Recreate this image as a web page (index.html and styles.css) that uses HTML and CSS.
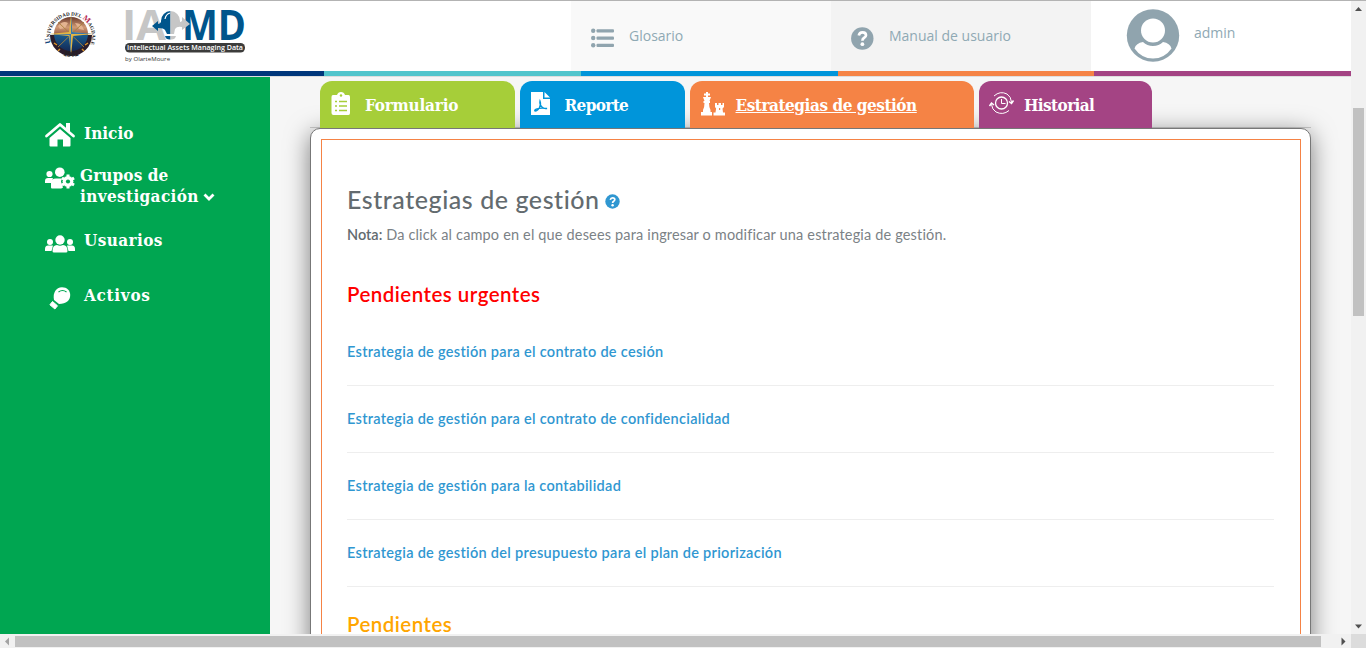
FILE: index.html
```html
<!DOCTYPE html>
<html lang="es">
<head>
<meta charset="utf-8">
<title>Estrategias de gestión</title>
<link rel="stylesheet" href="styles.css">
</head>
<body>
<div class="window">
  <div class="page">
    <header class="header">
      <div class="brands">
        <svg class="seal" width="54" height="54" viewBox="0 0 54 54">
          <defs>
            <path id="arcTop" d="M7 35A21 21 0 1 1 47 35"/>
            <path id="arcBottom" d="M13 44A23 23 0 0 0 41 44"/>
            <linearGradient id="globe" x1="0" y1="0" x2="0" y2="1"><stop offset="0" stop-color="#6b3a2c"/><stop offset=".3" stop-color="#d09a75"/><stop offset=".5" stop-color="#9a5f48"/><stop offset=".54" stop-color="#17598c"/><stop offset="1" stop-color="#152a55"/></linearGradient>
          </defs>
          <path d="M6 27h42A21 21 0 0 1 6 27z" fill="#2b1d2c"/>
          <circle cx="27" cy="26" r="17" fill="url(#globe)"/>
          <path d="M14 18q5-6 10-3l-3 5-5 1zM31 15q7 0 9 7l-5-1z" fill="#e3b390"/>
          <path d="M10 35l3 2M44 35l-3 2M14 43l2-2M40 43l-2-2" stroke="#d8932c" stroke-width="1.5"/>
          <path d="M14 14l26 25M40 14L14 39" stroke="#a8803a" stroke-width=".9"/>
          <path d="M27 7l2 17 20 2-20 2-2 20-2-20-20-2 20-2z" fill="#e2b544"/>
          <path d="M27 7v41l-1.500-21L5 26h44l-20.500-2z" fill="#3a77ad"/>
          <text class="seal-name"><textPath href="#arcTop"><tspan class="cap" fill="#15497e">U</tspan>NIVERSIDAD DEL <tspan class="cap" fill="#b5264f">M</tspan>AGDALENA</textPath></text>
          <text class="seal-year"><textPath href="#arcBottom" startOffset="7">1962</textPath></text>
        </svg>
        <svg class="iamd" width="124" height="54" viewBox="0 0 124 54">
          <text class="iamd-word" x="-2" y="33" textLength="44" lengthAdjust="spacingAndGlyphs" fill="#c6c6c6">IA</text>
          <text class="iamd-word" x="58" y="33" textLength="64" lengthAdjust="spacingAndGlyphs" fill="#00558c">MD</text>
          <path d="M46.500 4a10 10 0 0 0-9.500 10v1q-1 2-3 2v-3l-6 5 6 5v-3q6 0 7 2l2 4h3.500zM41 29h5.500v3.500Q42 33 41 29z" fill="#00558c"/>
          <path d="M46.500 4a10 10 0 0 1 9.500 10v1q1 0 2-1v-4l8 7-8 6v-3q-5-1-7 2l-1 5h-3.500zM46.500 29H52q-1 4-5.500 3.500z" fill="#c6c6c6"/>
          <path d="M41 12q1-5 5-6" fill="none" stroke="#fff" stroke-width="1.200"/>
          <rect x="1" y="36" width="120" height="9.500" rx="4.500" fill="#3c3c3b"/>
          <text class="iamd-tag" x="3" y="43.300" textLength="116" lengthAdjust="spacingAndGlyphs">Intellectual Assets Managing Data</text>
          <text class="iamd-by" x="1" y="53.500" textLength="45">by OlarteMoure</text>
        </svg>
      </div>
      <a class="link link-glossary">
        <svg width="24" height="20" viewBox="0 0 24 20" fill="#90a4ae"><circle cx="2.2" cy="2.8" r="2.2"/><circle cx="2.2" cy="10" r="2.2"/><circle cx="2.2" cy="17.2" r="2.2"/><rect x="5.500" y="1.3" width="17.5" height="3.200" rx="1"/><rect x="5.500" y="8.5" width="17.5" height="3.200" rx="1"/><rect x="5.500" y="15.7" width="17.5" height="3.200" rx="1"/></svg>
        <span>Glosario</span>
      </a>
      <a class="link link-manual">
        <svg width="24" height="24" viewBox="0 0 24 24"><circle cx="11.300" cy="12.500" r="11.200" fill="#90a4ae"/><path d="M7.800 9.500q.6-3.200 3.700-3.200 3.500 0 3.500 2.900 0 1.500-1.800 2.500-1.800 1-1.800 3" fill="none" stroke="#fff" stroke-width="2.700"/><circle cx="11.400" cy="18.200" r="1.900" fill="#fff"/></svg>
        <span>Manual de usuario</span>
      </a>
      <a class="user">
        <svg width="54" height="54" viewBox="0 0 54 54"><circle cx="27" cy="27.500" r="26.200" fill="#90a4ae"/><circle cx="27" cy="22.500" r="12" fill="#fff"/><path d="M17 34q4 4 10 4t10-4q7 1 8.500 6.500-7 10-18.500 10T8.500 40.500q1.500-5.500 8.500-6.500z" fill="#fff"/></svg>
        <span>admin</span>
      </a>
    </header>
    <div class="stripe"><i class="navy"></i><i class="teal"></i><i class="blue"></i><i class="orange"></i><i class="purple"></i></div>
    <div class="body">
      <nav class="sidebar">
        <a class="nav-item nav-home">
          <svg width="30" height="26" viewBox="0 0 30 26" fill="#fff"><path d="M1.500 14L15 2.500 28.500 14" fill="none" stroke="#fff" stroke-width="2.800" stroke-linecap="round" stroke-linejoin="round"/><path d="M21 1h4v9l-4-3.400zM4.500 16L15 7l10.500 9v7.500q0 1-1 1H18v-7h-5.500v7H5.500q-1 0-1-1z"/><path d="M3.500 15.500L15 5.700l11.500 9.800" fill="none" stroke="#00a651" stroke-width="1"/></svg>
          <span>Inicio</span>
        </a>
        <a class="nav-item nav-groups">
          <svg width="30" height="22" viewBox="0 0 30 22" fill="#fff"><circle cx="4.500" cy="7" r="3.100"/><circle cx="14.800" cy="5.200" r="4.800"/><path d="M0 16v-2q0-3 3-3h5l-2 5zM6 20.500v-4q0-5 5-5h6l-1 3 2 6q-1 1-2 1H7q-1 0-1-1z"/><circle cx="23" cy="14.500" r="5.900" stroke="#00a651" stroke-width="1"/><path d="M21.500 7.500h3v14h-3zM16.200 12.300l1.500-2.600 12.100 7-1.500 2.600zM28.300 9.700l1.500 2.600-12.100 7-1.500-2.600z"/><circle cx="23" cy="14.500" r="2.100" fill="#00a651"/></svg>
          <span><span class="line-a">Grupos de</span><br>investigación <svg class="chevron" width="12" height="10" viewBox="0 0 12 10"><path d="M1.500 2.500L6 7l4.500-4.500" fill="none" stroke="#fff" stroke-width="2.800"/></svg></span>
        </a>
        <a class="nav-item nav-users">
          <svg width="30" height="18" viewBox="0 0 30 18" fill="#fff"><circle cx="5" cy="7" r="3"/><circle cx="25" cy="7" r="3"/><circle cx="15" cy="5" r="4.700"/><path d="M0 16v-2q0-3.500 3-3.500h5L6.500 16zM30 16v-2q0-3.500-3-3.500h-5l1.500 5.500zM7.500 16q0-6 4.500-6 3 1.500 6 0 4.500 0 4.500 6 0 1.500-1.500 1.500H9q-1.500 0-1.500-1.500z"/></svg>
          <span>Usuarios</span>
        </a>
        <a class="nav-item nav-assets">
          <svg width="30" height="24" viewBox="0 0 30 24"><path d="M9 14C7.500 7 11 1.200 17 1.200c5 0 8.200 3.300 8.200 7.800 0 5.600-4 8.700-11.200 8.900z" fill="#fff"/><path d="M7.500 15.500l5 4.300-2.600 3.200-5-4.200z" fill="#fff" stroke="#fff" stroke-width="1" stroke-linejoin="round"/><path d="M13.500 6q4-3 8 0" fill="none" stroke="#00a651" stroke-width="1.100"/></svg>
          <span>Activos</span>
        </a>
      </nav>
      <main class="main">
        <div class="tabs">
          <a class="tab tab-form">
            <svg width="20" height="24" viewBox="0 0 20 24"><path d="M2 3h4q1-3 4-3t4 3h3.500q1.500 0 1.500 2v16q0 2-1.500 2h-15q-2 0-2-2V5q0-2 1.500-2z" fill="#fff"/><circle cx="10" cy="3.500" r="1.200" fill="#a6ce39"/><path d="M4 9.500h2M4 14h2M4 18.500h2M8 9.500h8M8 14h8M8 18.500h8" stroke="#a6ce39" stroke-width="1.700"/></svg>
            <span>Formulario</span>
          </a>
          <a class="tab tab-report">
            <svg width="20" height="24" viewBox="0 0 20 24"><path d="M0 0h12v7h7v16H0zM13.500 0L19 5.500h-5.500z" fill="#fff"/><path d="M9 9c2 5-2 10-5 10-1.500-1 3-4 12-2.500-4 1-8-3-7-7.500z" fill="none" stroke="#0095da" stroke-width="1.300"/></svg>
            <span>Reporte</span>
          </a>
          <a class="tab tab-strategy">
            <svg width="24" height="24" viewBox="0 0 24 24" fill="#fff"><path d="M5 0h2v1.500h2v2H7V5h3l-1.500 4H9v2H8q0 4 1.500 7v2H11v3.500H0V20h2v-2q1.500-3 1.500-7h-1V9h1L2 5h3V3.500H3v-2h2zM14 11h2v2h1.500v-2H20v2h1.500v-2H23v4l-1.500 1.500.5 4h2v3H12.500v-3h2l.6-4L14 15z"/><path d="M18 16h1.200v2H18z" fill="#f58345"/></svg>
            <span>Estrategias de gestión</span>
          </a>
          <a class="tab tab-history">
            <svg width="26" height="24" viewBox="0 0 26 24" fill="none" stroke="#fff" stroke-width="1"><circle cx="12.500" cy="11" r="6" stroke-width="1.300"/><path d="M12.500 7v4.500h4M5 4Q11-1.500 18 2q4 2.500 4.500 8M20 18.500q-6 5-13 1.500Q3 17.500 2.500 12.500"/><path d="M20 9.500l2.500 2 2-3M.5 14l2-3 2.500 2" stroke-width="1.500"/></svg>
            <span>Historial</span>
          </a>
        </div>
        <section class="card">
          <div class="frame">
            <h1><span>Estrategias de gestión</span><svg class="help" width="15" height="15" viewBox="0 0 15 15"><circle cx="7.500" cy="7.500" r="7.200" fill="#3097d1"/><path d="M5.300 5.800q.4-2 2.300-2 2.200 0 2.200 1.800 0 1-1.100 1.600-1.100.6-1.100 1.900" fill="none" stroke="#fff" stroke-width="1.700"/><circle cx="7.600" cy="11.200" r="1.200" fill="#fff"/></svg></h1>
            <p class="note"><b>Nota:</b> <span>Da click al campo en el que desees para ingresar o modificar una estrategia de gestión.</span></p>
            <h2 class="urgent">Pendientes urgentes</h2>
            <ul class="list">
              <li><a>Estrategia de gestión para el contrato de cesión</a></li>
              <li><a>Estrategia de gestión para el contrato de confidencialidad</a></li>
              <li><a>Estrategia de gestión para la contabilidad</a></li>
              <li><a>Estrategia de gestión del presupuesto para el plan de priorización</a></li>
            </ul>
            <h2 class="pending">Pendientes</h2>
          </div>
        </section>
      </main>
    </div>
  </div>
  <div class="vbar">
    <svg width="15" height="14" viewBox="0 0 15 14"><path d="M4 10l3.500-4L11 10z" fill="#505050"/></svg>
    <div class="vtrack"><div class="vthumb"></div></div>
    <svg width="15" height="14" viewBox="0 0 15 14"><path d="M4 4.500l3.500 4 3.500-4z" fill="#505050"/></svg>
  </div>
  <div class="hbar">
    <svg width="15" height="14" viewBox="0 0 15 14"><path d="M9 3.500L5 7.500l4 4z" fill="#a3a3a3"/></svg>
    <div class="hthumb"></div>
    <svg width="15" height="14" viewBox="0 0 15 14"><path d="M5.500 3.500l4 4-4 4z" fill="#505050"/></svg>
  </div>
  <div class="corner"></div>
</div>
</body>
</html>
```
FILE: styles.css
```css
* { box-sizing: border-box; }
body { margin: 0; overflow: hidden; font-family: Lato, sans-serif; }
svg { display: block; flex: none; overflow: visible; }
.window {
  display: grid;
  grid-template: 633px 14px / 1351px 15px;
  width: 1366px;
  height: 648px;
  border-top: 1px solid #b3b3b3;
}
.page { display: flex; flex-direction: column; overflow: hidden; background: #f6f6f6; }

/* Header */
.header { display: flex; height: 70px; flex: none; background: #fff; font: 14px "Open Sans", sans-serif; color: #8fa9b4; }
.brands { display: flex; width: 571px; padding: 7px 0 0 44px; }
.iamd { margin: -1px 0 0 26px; }
.seal-name { font: bold 5.1px "Liberation Serif", serif; fill: #222; }
.seal-name .cap { font-size: 8px; }
.seal-year { font: bold 8px "Liberation Serif", serif; fill: #222; }
.iamd-word { font: bold 41px "Open Sans", sans-serif; }
.iamd-tag { font: 600 7.5px "Open Sans", sans-serif; fill: #fff; }
.iamd-by { font: 6px "Open Sans", sans-serif; fill: #333; }
.link { display: flex; width: 260px; }
.link span { line-height: 20px; margin-top: 25px; }
.link-glossary { background: #f9f9f9; padding-left: 20px; gap: 14px; }
.link-glossary svg { margin-top: 27px; }
.link-manual { background: #f3f3f3; padding-left: 20px; gap: 14px; }
.link-manual svg { margin-top: 25px; }
.user { display: flex; padding: 7px 0 0 35px; gap: 14px; }
.user span { line-height: 20px; margin-top: 15px; }
.stripe { display: grid; grid-template-columns: 324px 257px 257px 256px 257px; height: 6px; flex: none; border-bottom: 1px solid #dedede; }
.navy { background: #00377b; }
.teal { background: #52c5cc; }
.blue { background: #0095da; }
.orange { background: #f58345; }
.purple { background: #a44484; }

.body { display: flex; flex: 1; min-height: 0; }

/* Sidebar */
.sidebar { width: 270px; flex: none; background: #00a651; padding: 46px 0 0 45px; color: #fff; font: bold 17px/21px "DejaVu Serif Condensed", "DejaVu Serif", serif; font-stretch: condensed; }
.nav-item { display: flex; gap: 9px; }
.nav-home svg { margin-top: -1px; }
.nav-groups { margin-top: 17px; gap: 5px; letter-spacing: .36px; }
.line-a { letter-spacing: .1px; }
.nav-groups > svg { margin-top: 2px; }
.nav-groups .chevron { display: inline-block; margin-left: -1.5px; }
.nav-users { margin-top: 24px; letter-spacing: .4px; }
.nav-users > span, .nav-assets > span { margin-top: -1px; }
.nav-users svg { margin-top: 4px; }
.nav-assets { margin-top: 33px; letter-spacing: .7px; }
.nav-assets svg { margin-top: 0; }

/* Tabs and card */
.main { flex: 1; padding: 4px 40px 0; }
.tabs { display: flex; gap: 5px; padding-left: 10px; width: 1001px; height: 47px; box-shadow: inset 0 -1px #ccc; }
.tab { position: relative; display: flex; padding: 11px 0 0 11px; border-radius: 12px 12px 0 0; color: #fff; font: bold 17px/26px "DejaVu Serif Condensed", "DejaVu Serif", serif; font-stretch: condensed; z-index: 1; }
.tab-form { width: 195px; background: #a6ce39; gap: 14px; letter-spacing: -.2px; }
.tab-report { width: 165px; background: #0095da; gap: 13.5px; letter-spacing: -.65px; }
.tab-strategy { width: 284px; background: #f58345; gap: 10.5px; text-decoration: underline; letter-spacing: -.46px; }
.tab-history { width: 173px; background: #a44484; padding-left: 10px; gap: 9px; letter-spacing: -.6px; }
.card { width: 1001px; height: 620px; padding: 10px 9px 0 10px; background: #fff; border: 1px solid #777; border-radius: 10px; box-shadow: 0 5px 25px rgba(0, 0, 0, .5); }
.frame { height: 600px; border: 1px solid #f58345; padding: 39px 26px 0 25px; color: #636b6f; }
h1, h2, p, ul { margin: 0; padding: 0; font-weight: 500; }
h1 { display: flex; font-size: 25px; line-height: 40px; }
h1 span { width: 252px; letter-spacing: .56px; white-space: nowrap; }
.help { margin: 15px 0 0 6px; }
.note { margin-top: 6px; font-size: 14.5px; line-height: 20px; font-weight: 400; letter-spacing: .16px; white-space: nowrap; }
.note span { color: #7b8286; }
.note b { font-weight: 600; letter-spacing: 0; }
h2 { font-size: 20.5px; line-height: 30px; font-weight: 600; letter-spacing: .47px; }
.urgent { margin-top: 34px; color: #f00; }
.pending { margin-top: 22px; color: #ffa500; }
.list { margin-top: 10px; list-style: none; }
.list li { height: 67px; border-bottom: 1px solid #eee; font-size: 14.5px; line-height: 66px; font-weight: 600; letter-spacing: .3px; color: #3097d1; }

/* Scrollbars */
.vbar { display: flex; flex-direction: column; background: #f1f1f1; }
.vtrack { flex: 1; padding: 93px 2px 0; }
.vthumb { height: 208px; background: #c1c1c1; }
.hbar { display: flex; background: #f1f1f1; }
.hthumb { width: 1306px; height: 11px; margin: 2px 0 0; background: #c1c1c1; }
.hbar svg:last-child { margin-left: 15px; }
.corner { background: #dcdcdc; }
```
